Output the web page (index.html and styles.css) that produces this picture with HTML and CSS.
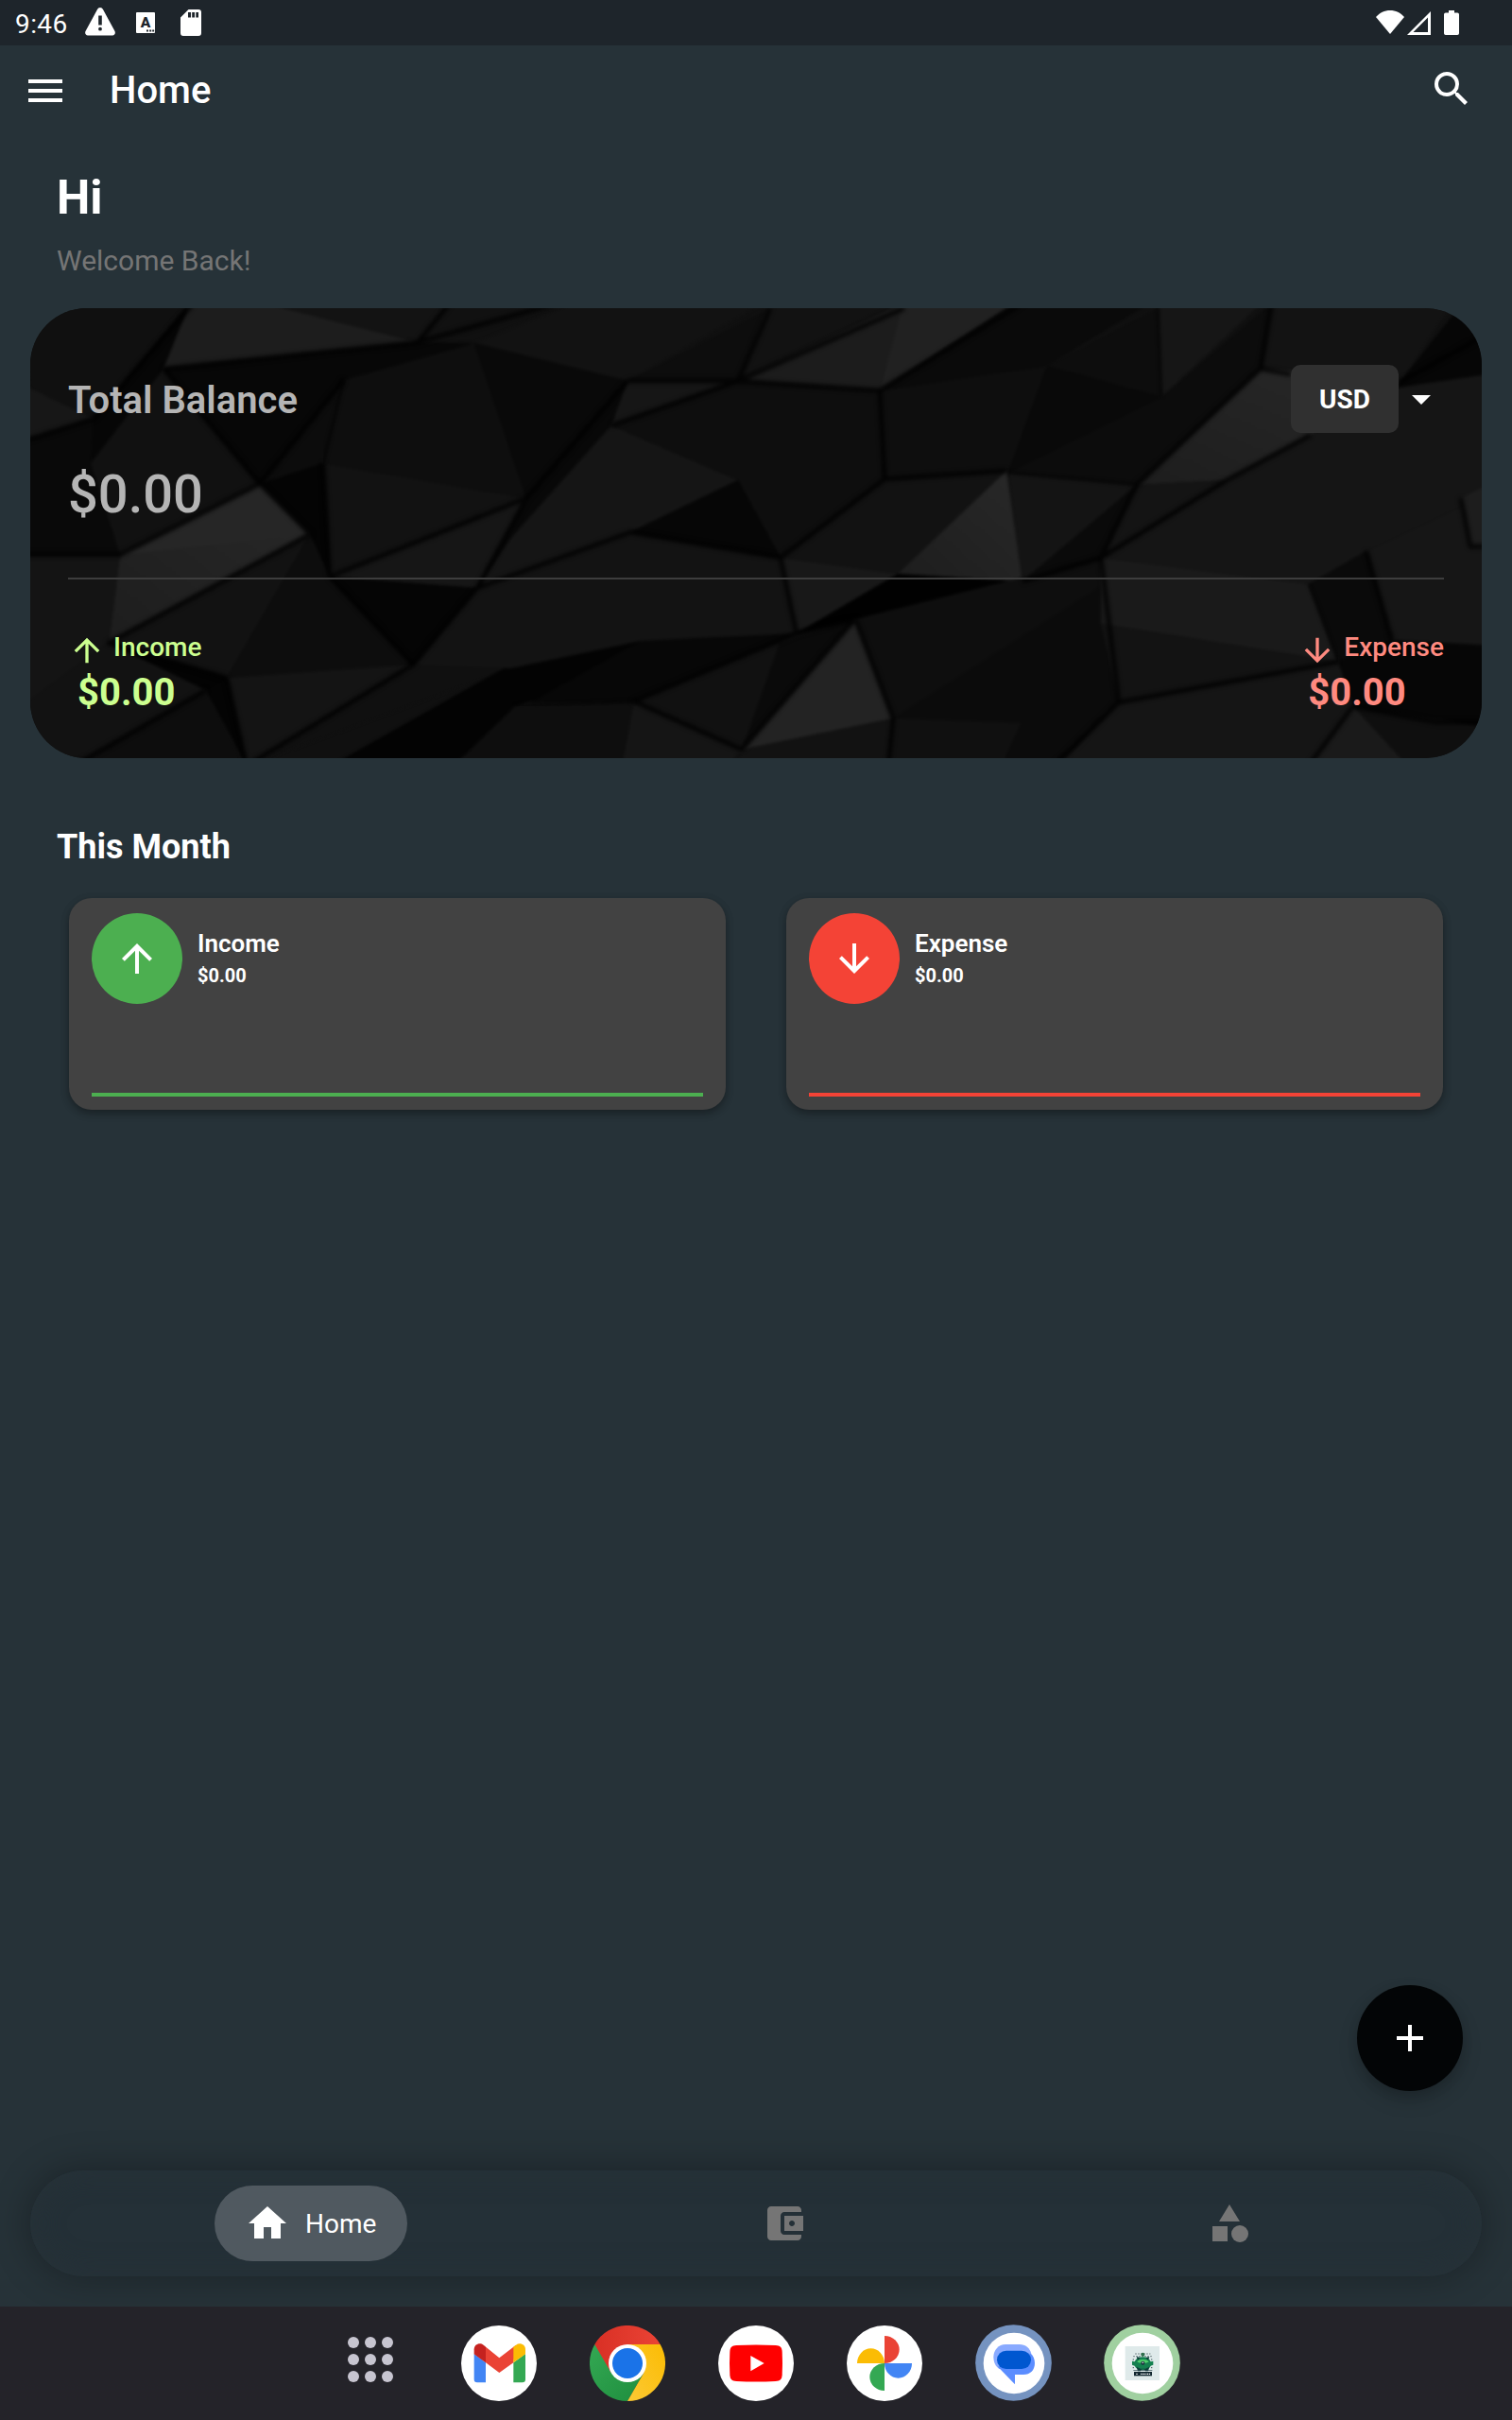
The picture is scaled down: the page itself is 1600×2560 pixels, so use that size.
FILE: index.html
```html
<!DOCTYPE html>
<html lang="en">
<head>
<meta charset="utf-8">
<title>Home</title>
<link rel="stylesheet" href="styles.css">
</head>
<body>
<div class="screen">
  <div class="status">
    <span class="clock">9:46</span>
    <svg class="st-warn" viewBox="0 0 32 30"><path fill="#fff" fill-rule="evenodd" d="M16 0c1.400 0 2.400.8 3 1.900L31.500 25c1 2-.2 4.500-2.500 4.500H3C.7 29.500-.5 27 .5 25L13 1.900C13.600.8 14.600 0 16 0zM14.200 8.500v10h3.600v-10zM16 20.800a1.900 1.900 0 1 0 0 3.800 1.900 1.900 0 0 0 0-3.800z"/></svg>
    <svg class="st-a" viewBox="0 0 20 22"><rect width="20" height="22" rx="1" fill="#fff"/><text x="10" y="16.300" text-anchor="middle" font-size="15.500" font-weight="900" fill="#1e252b">A</text><path fill="#1e252b" d="M11 18.500h2v2h-2zM14.200 18.500h2v2h-2zM17.200 18.500h2v2h-2z"/></svg>
    <svg class="st-sd" viewBox="0 0 22 28"><path fill="#fff" fill-rule="evenodd" d="M8.500 0H19a3 3 0 0 1 3 3v22a3 3 0 0 1-3 3H3a3 3 0 0 1-3-3V8.500zM8 3v5.500h3V3zM12.200 3v5.500h2.800V3zM16.300 3v5.500H19V3z"/></svg>
    <span class="grow"></span>
    <svg class="st-wifi" viewBox="0 0 30 25"><path fill="#fff" d="M15 25 0 7C4 2.500 9 0 15 0s11 2.500 15 7z"/></svg>
    <svg class="st-sig" viewBox="0 0 25 25"><path fill="#fff" fill-rule="evenodd" d="M25 0v25H0zM22 6.500 6.500 22H22z"/></svg>
    <svg class="st-bat" viewBox="0 0 16 26"><path fill="#fff" d="M5 0h6v2.500h3.200A1.800 1.800 0 0 1 16 4.300v19.900a1.800 1.800 0 0 1-1.800 1.800H1.800A1.800 1.800 0 0 1 0 24.200V4.300a1.800 1.800 0 0 1 1.800-1.800H5z"/></svg>
  </div>

  <header class="appbar">
    <svg class="icon48" viewBox="0 0 24 24"><path fill="#fff" d="M3 18h18v-2H3zm0-5h18v-2H3zm0-7v2h18V6z"/></svg>
    <h1 class="title">Home</h1>
    <span class="grow"></span>
    <svg class="icon48 search" viewBox="0 0 24 24"><path fill="#fff" d="M15.500 14h-.79l-.28-.27A6.470 6.470 0 0 0 16 9.500 6.500 6.500 0 1 0 9.500 16c1.610 0 3.090-.59 4.230-1.570l.27.28v.79l5 4.990L20.490 19zm-6 0C7.010 14 5 11.990 5 9.500S7.010 5 9.500 5 14 7.010 14 9.500 11.990 14 9.500 14z"/></svg>
  </header>

  <section class="greeting">
    <h2 class="hi">Hi</h2>
    <p class="welcome">Welcome Back!</p>
  </section>

  <section class="balance">
    <svg class="facets" viewBox="32 326 1536 476" preserveAspectRatio="none">
      <defs>
        <filter id="soft" x="0" y="0" width="1" height="1" color-interpolation-filters="sRGB"><feGaussianBlur stdDeviation="1.500"/></filter>
        <filter id="seam" x="0" y="0" width="1" height="1" color-interpolation-filters="sRGB"><feGaussianBlur stdDeviation="2.200"/></filter>
        <linearGradient id="lit" x1="1" y1="0" x2="0" y2="1"><stop offset="0" stop-color="#282828"/><stop offset="1" stop-color="#1d1d1d"/></linearGradient>
      </defs>
      <rect x="32" y="326" width="1536" height="476" fill="#101010"/>
      <g filter="url(#soft)">
        <path fill="#101010" d="M20 310H205L99 443 32 410z"/>
        <path fill="#060606" d="M201 320 173 390 96 490 99 443z"/>
        <path fill="#171717" d="M20 405 99 443 20 468z"/>
        <path fill="#090909" d="M20 468 99 443 96 490 127 587H20z"/>
        <path fill="#111" d="M173 390 275 512 127 587 96 490z"/>
        <path fill="#1d1d1d" d="M203 316H261L442 362 173 390z"/>
        <path fill="#131313" d="M261 316H480L442 362z"/>
        <path fill="#070707" d="M173 390 442 362 502 363 364 402 275 512z"/>
        <path fill="#111" d="M480 316H610L442 362z"/>
        <path fill="#0e0e0e" d="M364 402 502 363 557 527 342 490z"/>
        <path fill="#0c0c0c" d="M364 402 342 490 275 512z"/>
        <path fill="#040404" d="M275 512 342 490 349 610 328 565z"/>
        <path fill="url(#lit)" d="M275 512 328 565 115 680 127 587z"/>
        <path fill="#262626" d="M275 512 328 565 290 570 127 587z"/>
        <path fill="#121212" d="M342 490 557 527 349 610z"/>
        <path fill="#161616" d="M349 610 557 527 505 622z"/>
        <path fill="#141414" d="M20 587H127L115 680 20 750z"/>
        <path fill="#121212" d="M328 565 240 717 115 680z"/>
        <path fill="#0d0d0d" d="M328 565 349 610 437 703 240 717z"/>
        <path fill="#050505" d="M349 610 505 622 437 703z"/>
        <path fill="#121212" d="M20 750 115 680 218 730 91 802H20z"/>
        <path fill="#030303" d="M115 680 240 717 218 730z"/>
        <path fill="#0d0d0d" d="M218 730 261 815H70z"/>
        <path fill="#040404" d="M218 730 240 717 261 810z"/>
        <path fill="#141414" d="M240 717 437 703 261 810z"/>
        <path fill="#101010" d="M505 622 540 610V707L437 703z"/>
        <path fill="#101010" d="M505 622 540 610 540 707 261 810 437 703z"/>
        <path fill="#030303" d="M540 703 678 678 600 730 545 747 480 810H350z"/>
        <path fill="#070707" d="M678 678 843 670 671 742 560 744z"/>
        <path fill="#0e0e0e" d="M545 747 671 742 658 810H480z"/>
        <path fill="#151515" d="M671 742 785 793 770 810H658z"/>
        <path fill="#111" d="M671 742 843 670 785 793z"/>
        <path fill="#0a0a0a" d="M825 680 905 655 785 793z"/>
        <path fill="#121212" d="M502 363 620 316H815L664 403z"/>
        <path fill="#0d0d0d" d="M664 403 815 326 781 403z"/>
        <path fill="#090909" d="M502 363 664 403 557 527z"/>
        <path fill="#080808" d="M664 403 647 450 540 580 505 622 557 527z"/>
        <path fill="#161616" d="M664 403H781L647 450z"/>
        <path fill="#151515" d="M647 450 781 508 667 563 505 622 540 570z"/>
        <path fill="#121212" d="M815 316H957L781 403z"/>
        <path fill="#1c1c1c" d="M957 320 931 413 781 403z"/>
        <path fill="#212121" d="M957 316H1090L931 413z"/>
        <path fill="#0e0e0e" d="M781 403 931 413 936 507 826 590 781 508 647 450z"/>
        <path fill="#060606" d="M781 508 826 590 667 563z"/>
        <path fill="#131313" d="M505 622 667 563 826 590 843 670 678 678 540 707 440 703z"/>
        <path fill="#0a0a0a" d="M1080 316H1225L1108 387 931 413z"/>
        <path fill="#0e0e0e" d="M931 413 1108 387 1067 500 936 507z"/>
        <path fill="#121212" d="M936 507 1065 498 950 607 826 590z"/>
        <path fill="#181818" d="M826 590 950 607 843 670z"/>
        <path fill="url(#lit)" d="M1065 498 1082 615 950 607z"/>
        <path fill="#010101" d="M950 607 1082 615 905 655 843 670z"/>
        <path fill="#232323" d="M905 655 945 760 785 793z"/>
        <path fill="#121212" d="M785 793 945 760 940 810H780z"/>
        <path fill="#0e0e0e" d="M905 655 1165 590 1184 743 1060 700 945 760z"/>
        <path fill="#0b0b0b" d="M945 760 1165 620 1184 743 1122 810H940z"/>
        <path fill="#101010" d="M945 760 1080 765 1060 810H940z"/>
        <path fill="#0d0d0d" d="M1108 387 1225 326 1229 420z"/>
        <path fill="#090909" d="M1108 387 1229 420 1067 500z"/>
        <path fill="#161616" d="M1225 316H1340L1229 420z"/>
        <path fill="#0c0c0c" d="M1229 420 1346 320 1334 390 1203 513 1067 500z"/>
        <path fill="#141414" d="M1067 500 1203 513 1082 615z"/>
        <path fill="#0a0a0a" d="M1203 513 1165 590 1082 615z"/>
        <path fill="#131313" d="M1346 316H1540L1480 408 1334 390z"/>
        <path fill="#060606" d="M1540 330 1580 350V400L1475 412z"/>
        <path fill="url(#lit)" d="M1334 390 1480 400 1387 460 1298 508 1203 513z"/>
        <path fill="#141414" d="M1203 513 1298 508 1165 590z"/>
        <path fill="#151515" d="M1298 508 1480 410 1580 395V520L1446 583 1385 618 1165 590z"/>
        <path fill="#1a1a1a" d="M1165 590 1385 618 1416 700 1165 660z"/>
        <path fill="#131313" d="M1165 660 1416 700 1184 743z"/>
        <path fill="#0a0a0a" d="M1385 618 1446 583 1473 677 1416 700z"/>
        <path fill="#161616" d="M1446 583 1580 520V685L1473 677z"/>
        <path fill="#1d1d1d" d="M1546 527 1580 510V580L1556 578z"/>
        <path fill="#060606" d="M1416 700 1473 677 1580 683V770L1432 747z"/>
        <path fill="#151515" d="M1184 743 1416 700 1432 747 1385 810H1120z"/>
        <path fill="#1a1a1a" d="M1432 747 1490 810H1385z"/>
        <path fill="#0f0f0f" d="M1432 747 1580 770V810H1490z"/>
      </g>
      <g filter="url(#seam)" fill="none" stroke="#000" stroke-opacity=".85" stroke-width="4.500" stroke-linejoin="round">
        <path d="M205 320 99 443 20 468M173 390 442 362 620 312M480 316 442 362M173 390 275 512 364 402M275 512 127 587H20M275 512 328 565 115 680 240 717M342 490 349 610M349 610 557 527M349 610 437 703 505 622M557 527 505 622"/>
        <path d="M664 403 557 527M505 622 667 563 826 590 936 507 931 413 781 403 664 403M781 403 957 326M781 403 647 450M781 403 815 326M931 413 1090 316M936 507 1065 498M826 590 843 670 671 742 785 793M843 670 905 655 945 760 940 810M905 655 785 793"/>
        <path d="M218 730 70 815M240 717 261 810 437 703M1203 513 1334 390 1346 320M1334 390 1366 396M1203 513 1165 590 1184 743 1110 815M1165 590 1298 508 1387 460M1480 405 1580 350M1165 590 1082 615M1184 743 1416 700M1446 583 1473 677M1546 527 1556 578H1580M1432 747 1385 810M1432 747 1520 764H1580"/>
      </g>
      <g filter="url(#soft)" fill="none" stroke="#000" stroke-opacity=".4" stroke-width="4">
        <path d="M1229 420 1225 316M1067 500 1203 513M671 742 545 747M342 490 364 402M1385 618 1416 700"/>
      </g>
    </svg>
    <div class="balance-body">
      <div class="balance-head">
        <span class="balance-label">Total Balance</span>
        <div class="currency">
          <span class="code">USD</span>
          <svg class="icon48" viewBox="0 0 24 24"><path fill="#fff" d="M7 10l5 5 5-5z"/></svg>
        </div>
      </div>
      <div class="amount">$0.00</div>
      <div class="divider"></div>
      <div class="flows">
        <div class="flow income">
          <div class="flow-name"><svg class="icon40" viewBox="0 0 24 24"><path fill="currentColor" d="M4 12l1.410 1.410L11 7.830V20h2V7.830l5.580 5.590L20 12l-8-8z"/></svg><span>Income</span></div>
          <div class="flow-amt">$0.00</div>
        </div>
        <div class="flow expense">
          <div class="flow-name"><svg class="icon40" viewBox="0 0 24 24"><path fill="currentColor" d="M20 12l-1.410-1.410L13 16.170V4h-2v12.170l-5.580-5.590L4 12l8 8z"/></svg><span>Expense</span></div>
          <div class="flow-amt">$0.00</div>
        </div>
      </div>
    </div>
  </section>

  <h3 class="month">This Month</h3>
  <section class="cards">
    <article class="card up">
      <div class="card-top">
        <div class="badge"><svg class="icon48" viewBox="0 0 24 24"><path fill="#fff" d="M4 12l1.410 1.410L11 7.830V20h2V7.830l5.580 5.590L20 12l-8-8z"/></svg></div>
        <div class="card-text"><div class="card-name">Income</div><div class="card-amt">$0.00</div></div>
      </div>
      <div class="bar"></div>
    </article>
    <article class="card down">
      <div class="card-top">
        <div class="badge"><svg class="icon48" viewBox="0 0 24 24"><path fill="#fff" d="M20 12l-1.410-1.410L13 16.170V4h-2v12.170l-5.580-5.590L4 12l8 8z"/></svg></div>
        <div class="card-text"><div class="card-name">Expense</div><div class="card-amt">$0.00</div></div>
      </div>
      <div class="bar"></div>
    </article>
  </section>

  <span class="grow"></span>
  <button class="fab" aria-label="Add"><svg class="icon48" viewBox="0 0 24 24"><path fill="#fff" d="M19 13h-6v6h-2v-6H5v-2h6V5h2v6h6z"/></svg></button>

  <nav class="nav">
    <a class="pill"><svg class="icon48" viewBox="0 0 24 24"><path fill="#fff" d="M10 20v-6h4v6h5v-8h3L12 3 2 12h3v8z"/></svg><span>Home</span></a>
    <a class="tab wallet"><svg class="icon48" viewBox="0 0 24 24"><path fill="#757575" d="M21 18v1c0 1.100-.9 2-2 2H5c-1.110 0-2-.9-2-2V5c0-1.100.89-2 2-2h14c1.100 0 2 .9 2 2v1h-9c-1.110 0-2 .9-2 2v8c0 1.100.89 2 2 2h9zm-9-2h10V8H12v8zm4-2.500c-.83 0-1.500-.67-1.500-1.500s.67-1.500 1.500-1.500 1.500.67 1.500 1.500-.67 1.500-1.500 1.500z"/></svg></a>
    <a class="tab"><svg class="icon48" viewBox="0 0 24 24"><g fill="#757575"><path d="M12 2l-5.500 9h11zM3 13.500h8v8H3z"/><circle cx="17.500" cy="17.500" r="4.500"/></g></svg></a>
  </nav>

  <footer class="taskbar">
    <svg class="dots" viewBox="0 0 48 48"><g fill="#c7c5d0"><circle cx="6" cy="6" r="6"/><circle cx="24" cy="6" r="6"/><circle cx="42" cy="6" r="6"/><circle cx="6" cy="24" r="6"/><circle cx="24" cy="24" r="6"/><circle cx="42" cy="24" r="6"/><circle cx="6" cy="42" r="6"/><circle cx="24" cy="42" r="6"/><circle cx="42" cy="42" r="6"/></g></svg>
    <svg class="app" viewBox="0 0 240 240">
      <circle cx="120" cy="120" r="120" fill="#fff"/>
      <path fill="#4285f4" d="M41 90l37 28v63H51a10 10 0 0 1-10-10z"/>
      <path fill="#34a853" d="M204 90l-38 28v63h28a10 10 0 0 0 10-10z"/>
      <path fill="#ea4335" d="M71 62l50 41 53-41-8 56-45 32-43-32V67z"/>
      <path fill="#c5221f" d="M41 91V76c0-16 18-23 30-14l7 6v50z"/>
      <path fill="#fbbc04" d="M204 91V76c0-16-18-23-30-14l-8 6v50z"/>
    </svg>
    <svg class="app" viewBox="0 0 240 240">
      <defs>
        <linearGradient id="cr"><stop offset="0" stop-color="#d93025"/><stop offset="1" stop-color="#ea4335"/></linearGradient>
        <linearGradient id="cg" x1="0" y1="0" x2="1" y2="1"><stop offset="0" stop-color="#34a853"/><stop offset="1" stop-color="#1e8e3e"/></linearGradient>
        <linearGradient id="cy" x1="1" y1="0" x2="0" y2="1"><stop offset="0" stop-color="#fbbc04"/><stop offset="1" stop-color="#fcc934"/></linearGradient>
      </defs>
      <path fill="url(#cg)" d="M16 60A120 120 0 0 0 120 240L172 150 120 120z"/>
      <path fill="url(#cr)" d="M16 60A120 120 0 0 1 224 60H120L68 150z"/>
      <path fill="url(#cy)" d="M224 60A120 120 0 0 1 120 240L172 150 120 60z"/>
      <circle cx="120" cy="120" r="60" fill="#fff"/><circle cx="120" cy="120" r="48" fill="#1a73e8"/>
    </svg>
    <svg class="app" viewBox="0 0 240 240">
      <circle cx="120" cy="120" r="120" fill="#fff"/>
      <path fill="#f00" d="M58 63q62-3 124 0c15 1 20 6 21 20q2 37 0 74c-1 14-6 19-21 20q-62 3-124 0c-15-1-20-6-21-20q-2-37 0-74c1-14 6-19 21-20z"/>
      <path fill="#fff" d="M103 96v49l43-25z"/>
    </svg>
    <svg class="app" viewBox="0 0 240 240">
      <circle cx="120" cy="120" r="120" fill="#fff"/>
      <path fill="#ea4335" d="M120 33a47 43.500 0 0 1 0 87z"/>
      <path fill="#fbbc04" d="M33 120a43.500 47 0 0 1 87 0z"/>
      <path fill="#4285f4" d="M207 120a43.500 47 0 0 1-87 0z"/>
      <path fill="#34a853" d="M120 207a47 43.500 0 0 1 0-87z"/>
    </svg>
    <svg class="app ring" viewBox="0 0 243 243">
      <circle cx="121.500" cy="121.500" r="121" fill="#7593c0"/>
      <circle cx="123" cy="123" r="97" fill="#fff"/>
      <path fill="#89aaff" d="M96 63h44c20 0 34 12 38 30l-8 48H76c-12-8-18-22-18-38 0-22 16-40 38-40z"/>
      <path fill="#5b8dff" d="M176 92c8 6 13 17 13 30 0 22-14 37-36 37h-27v31L72 134z"/>
      <rect x="69" y="83" width="108" height="58" rx="29" fill="#0057d0"/>
    </svg>
    <svg class="app ring" viewBox="0 0 243 243">
      <circle cx="121.500" cy="121.500" r="121" fill="#a0d0a0"/>
      <circle cx="123" cy="123" r="97" fill="#fff"/>
      <rect x="68" y="69" width="109" height="108" fill="#dfeaea"/>
      <g fill="none" stroke="#243b40" stroke-width="2.500" stroke-dasharray="4 5"><path d="M100 93h48M94 101h60M92 111h8M150 111h8M92 137h8M150 137h8"/></g>
      <path fill="#14804f" d="M90 116l8 2c4-10 14-15 26-15s21 5 25 15l8-2v12l-8 3c-4 9-13 14-25 14s-22-5-26-14l-8-3z"/>
      <path fill="#0c3c38" d="M104 134l4 14h9l3-6h9l3 6h9l4-14-12 6h-17zM104 102l12 3-8 8zM145 102l-12 3 8 8z"/>
      <path fill="#4fcf6c" d="M106 118c5-9 31-9 37 0-6 6-31 6-37 0z"/>
      <circle cx="124" cy="122" r="6" fill="#1b2b3a"/><circle cx="124" cy="121" r="2.500" fill="#c9e8d8"/>
      <circle cx="124" cy="95" r="6" fill="#2f6f4c"/>
      <path fill="#2f4a50" d="M94 145h60v2H94z"/>
      <rect x="96" y="150" width="57" height="13" fill="#10262e"/>
      <path stroke="#fff" stroke-width="4" stroke-dasharray="4 2 3 1.500" d="M103 157h6M117 157h32"/>
    </svg>
  </footer>
</div>
</body>
</html>
```
FILE: styles.css
```css
* { box-sizing: border-box; margin: 0; padding: 0; }
body { background: #263238; font-family: Roboto, "Liberation Sans", sans-serif; color: #fff; }
svg { display: block; flex: none; }
.screen { width: 1600px; height: 2560px; display: flex; flex-direction: column; background: #263238; overflow: hidden; }
.grow { flex: 1; }
.icon48 { width: 48px; height: 48px; }
.icon40 { width: 40px; height: 40px; }

.status { height: 48px; background: #1e252b; display: flex; align-items: flex-start; padding: 0 56px 0 16px; }
.clock { font-size: 28px; line-height: 33px; margin-top: 9px; width: 74px; letter-spacing: .4px; }
.st-warn { width: 32px; height: 30px; margin-top: 8px; }
.st-a { width: 20px; height: 22px; margin: 13px 0 0 22px; }
.st-sd { width: 22px; height: 28px; margin: 10px 0 0 27px; }
.st-wifi { width: 30px; height: 25px; margin-top: 11px; }
.st-sig { width: 25px; height: 25px; margin: 12px 0 0 3px; }
.st-bat { width: 16px; height: 26px; margin: 11px 0 0 14px; }

.appbar { height: 96px; display: flex; align-items: center; padding: 0 40px 0 24px; }
.title { font-size: 40px; line-height: 47px; font-weight: 500; margin: 0 0 2px 44px; }
.search { margin-bottom: 4px; }

.greeting { padding: 36px 60px 0; height: 182px; }
.hi { font-size: 50px; line-height: 59px; font-weight: 700; }
.welcome { font-size: 30px; line-height: 35px; margin-top: 19px; color: #757575; }

.balance { margin: 0 32px; height: 476px; border-radius: 60px; overflow: hidden; display: grid; flex: none; }
.balance > * { grid-area: 1 / 1; }
.facets { width: 1536px; height: 476px; }
.balance-body { position: relative; padding: 60px 40px 0; }
.balance-head { height: 72px; display: flex; justify-content: space-between; align-items: center; }
.balance-label { font-size: 40px; line-height: 47px; font-weight: 600; color: #b5b5b5; margin-top: 2px; }
.currency { display: flex; align-items: center; }
.code { width: 114px; height: 72px; border-radius: 10px; background: #303030; font-size: 28px; font-weight: 700; line-height: 74px; text-align: center; }
.amount { font-size: 56px; line-height: 66px; font-weight: 500; color: #b5b5b5; margin-top: 32px; }
.divider { height: 2px; background: #3d3d3d; margin-top: 55px; }
.flows { display: flex; justify-content: space-between; margin-top: 55px; }
.flow-name { display: flex; gap: 8px; font-size: 28px; line-height: 33px; font-weight: 500; height: 41px; }
.flow-amt { font-size: 40px; line-height: 47px; font-weight: 700; padding-left: 10px; }
.income { color: #ccff90; }
.expense { color: #ff8a80; }

.month { font-size: 36px; line-height: 42px; font-weight: 700; margin: 73px 60px 33px; }
.cards { display: flex; gap: 64px; padding: 0 73px; }
.card { flex: 1; height: 224px; border-radius: 24px; background: #424242; padding: 16px 24px 14px; display: flex; flex-direction: column; justify-content: space-between; box-shadow: 0 4px 8px rgba(0,0,0,.26), 0 2px 10px rgba(0,0,0,.12); }
.card-top { display: flex; gap: 16px; }
.badge { width: 96px; height: 96px; border-radius: 50%; display: flex; align-items: center; justify-content: center; }
.up .badge, .up .bar { background: #4caf50; }
.down .badge, .down .bar { background: #f44336; }
.bar { height: 4px; }
.card-name { font-size: 26px; line-height: 30px; font-weight: 600; margin-top: 17px; }
.card-amt { font-size: 20px; line-height: 24px; font-weight: 700; margin-top: 7px; }

.fab { align-self: flex-end; width: 112px; height: 112px; border: 0; border-radius: 50%; background: #030506; margin: 0 52px 84px 0; display: flex; align-items: center; justify-content: center; box-shadow: 0 10px 20px rgba(0,0,0,.18), 0 4px 12px rgba(0,0,0,.1); }

.nav { margin: 0 32px 32px; height: 112px; border-radius: 56px; display: flex; align-items: center; padding-left: 195px; background: #243037; box-shadow: 0 0 40px rgba(0,0,0,.32), inset 0 0 30px #273238; }
.pill { width: 204px; height: 80px; border-radius: 40px; background: #505960; display: flex; align-items: center; padding-left: 32px; gap: 16px; font-size: 28px; }
.tab { width: 112px; display: flex; justify-content: center; }
.wallet { margin: 0 359px 0 343px; }

.taskbar { height: 120px; background: #242329; display: flex; align-items: center; padding-left: 368px; flex: none; position: relative; }
.dots { width: 48px; height: 48px; margin: 0 72px 8px 0; }
.app { width: 80px; height: 80px; margin-right: 56px; }
.ring { width: 81px; height: 81px; margin: 0 55px 1px 0; }
```
